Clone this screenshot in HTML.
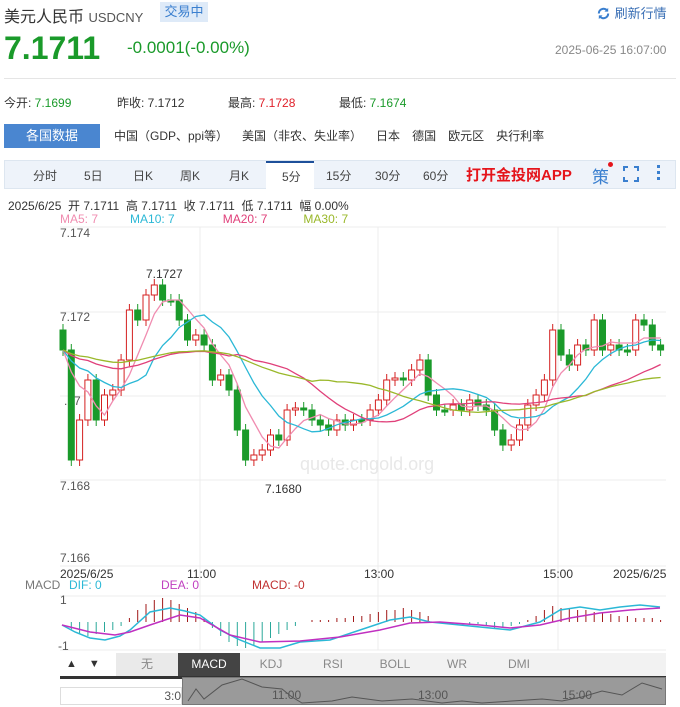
<!DOCTYPE html><html><head><meta charset="utf-8"><style>
*{margin:0;padding:0;box-sizing:border-box}
body{width:680px;height:707px;background:#fff;font-family:"Liberation Sans","Noto Sans CJK SC",sans-serif;position:relative;overflow:hidden;color:#333}
.a{position:absolute;white-space:nowrap}
</style></head><body>
<div class="a" style="left:4px;top:3px;font-size:16px;color:#333">美元人民币 <span style="font-size:13px;color:#555">USDCNY</span></div>
<div class="a" style="left:160px;top:2px;width:48px;height:20px;background:#deeaf8;color:#3a7fcf;font-size:13px;line-height:20px;text-align:center">交易中</div>
<div class="a" style="left:596px;top:3px;font-size:13px;color:#3a6fb5"><svg width="15" height="15" viewBox="0 0 16 16" style="vertical-align:-3px"><path d="M3 8a5 5 0 0 1 9-3M13 8a5 5 0 0 1-9 3" stroke="#3a7fcf" stroke-width="2.2" fill="none"/><path d="M13 2v4h-4zM3 14v-4h4z" fill="#3a7fcf"/></svg> 刷新行情</div>
<div class="a" style="left:4px;top:30px;font-size:32px;font-weight:bold;color:#1a9a2a">7.1711</div>
<div class="a" style="left:127px;top:38px;font-size:17px;color:#1a9a2a">-0.0001(-0.00%)</div>
<div class="a" style="left:555px;top:43px;font-size:12px;color:#888">2025-06-25 16:07:00</div>
<div class="a" style="left:4px;top:78px;width:672px;height:1px;background:#e5e5e5"></div>
<div class="a" style="left:4px;top:94px;font-size:12px;color:#333">今开: <span style="color:#1a9a2a">7.1699</span></div>
<div class="a" style="left:117px;top:94px;font-size:12px">昨收: 7.1712</div>
<div class="a" style="left:228px;top:94px;font-size:12px">最高: <span style="color:#e0202a">7.1728</span></div>
<div class="a" style="left:339px;top:94px;font-size:12px">最低: <span style="color:#1a9a2a">7.1674</span></div>
<div class="a" style="left:4px;top:124px;width:96px;height:24px;background:#4a86d0;color:#fff;font-size:13px;line-height:24px;text-align:center">各国数据</div>
<div class="a" style="left:100px;top:124px;width:576px;height:24px;font-size:12px;line-height:24px;color:#333"><span style="margin-left:14px">中国（GDP、ppi等）</span><span style="margin-left:14px">美国（非农、失业率）</span><span style="margin-left:14px">日本</span><span style="margin-left:12px">德国</span><span style="margin-left:12px">欧元区</span><span style="margin-left:12px">央行利率</span></div>
<div class="a" style="left:4px;top:160px;width:672px;height:29px;background:#eef3fa;border:1px solid #dde6f0"></div>
<div class="a" style="left:266px;top:161px;width:48px;height:29px;background:#fff;border-top:2px solid #1d4f9a"></div>
<div class="a" style="top:167px;left:0;font-size:12px;color:#444">
<span class="a" style="left:33px">分时</span><span class="a" style="left:84px">5日</span><span class="a" style="left:133px">日K</span><span class="a" style="left:180px">周K</span><span class="a" style="left:229px">月K</span><span class="a" style="left:282px;top:1px">5分</span><span class="a" style="left:326px">15分</span><span class="a" style="left:375px">30分</span><span class="a" style="left:423px">60分</span></div>
<div class="a" style="left:466px;top:164px;font-size:15px;font-weight:bold;color:#e5141b">打开金投网APP</div>
<div class="a" style="left:592px;top:163px;font-size:17px;color:#3a7fcf">策</div>
<div class="a" style="left:608px;top:162px;width:5px;height:5px;border-radius:50%;background:#e5141b"></div>
<svg class="a" style="left:623px;top:166px" width="16" height="16"><path d="M1 5V1h4M11 1h4v4M15 11v4h-4M5 15H1v-4" stroke="#3a7fcf" stroke-width="2" fill="none"/></svg>
<div class="a" style="left:657px;top:165px;width:3px;height:3px;background:#3a7fcf;box-shadow:0 6px #3a7fcf,0 12px #3a7fcf"></div>
<div class="a" style="left:8px;top:197px;font-size:12px;color:#333">2025/6/25 &nbsp;开 7.1711 &nbsp;高 7.1711 &nbsp;收 7.1711 &nbsp;低 7.1711 &nbsp;幅 0.00%</div>
<div class="a" style="left:60px;top:212px;font-size:12px"><span style="color:#f08cb0">MA5: 7</span><span style="color:#2bb8d6;margin-left:32px">MA10: 7</span><span style="color:#e0407a;margin-left:48px">MA20: 7</span><span style="color:#9ab82a;margin-left:36px">MA30: 7</span></div>
<svg class="a" style="left:0;top:0" width="680" height="707" id="ch">
<g stroke="#ececec" stroke-width="1">
<line x1="60" y1="227" x2="666" y2="227"/><line x1="60" y1="312" x2="666" y2="312"/><line x1="60" y1="396" x2="666" y2="396"/><line x1="60" y1="480" x2="666" y2="480"/><line x1="60" y1="566" x2="666" y2="566"/>
<line x1="200" y1="227" x2="200" y2="650"/><line x1="378" y1="227" x2="378" y2="650"/><line x1="558" y1="227" x2="558" y2="650"/>
<line x1="60" y1="596" x2="666" y2="596"/><line x1="60" y1="650" x2="666" y2="650"/>
</g>
<g font-size="12" fill="#555" font-family="Liberation Sans,sans-serif">
<text x="60" y="237">7.174</text><text x="60" y="321">7.172</text><text x="64" y="405">.17</text><text x="60" y="490">7.168</text><text x="60" y="562">7.166</text>
<text x="60" y="578" fill="#333">2025/6/25</text><text x="187" y="578" fill="#333">11:00</text><text x="364" y="578" fill="#333">13:00</text><text x="543" y="578" fill="#333">15:00</text><text x="613" y="578" fill="#333">2025/6/25</text>
<text x="146" y="278" fill="#333">7.1727</text><text x="265" y="493" fill="#333">7.1680</text>
<text x="25" y="589" fill="#777">MACD</text><text x="69" y="589" fill="#2bb8d6">DIF: 0</text><text x="161" y="589" fill="#c040c0">DEA: 0</text><text x="252" y="589" fill="#c03030">MACD: -0</text>
<text x="60" y="604">1</text><text x="58" y="650">-1</text>
</g>
<text x="300" y="470" font-size="18" fill="#e8e8e8" font-family="Liberation Sans,sans-serif">quote.cngold.org</text>
<g id="k"></g>
<path d="M62,625 75,632 90,638 105,640 120,636 130,630 150,612 170,608 185,611 200,615 220,630 240,640 260,648 280,648 300,642 330,640 360,630 390,620 410,617 430,622 460,625 490,628 510,630 540,622 560,610 580,607 600,610 620,607 640,605 660,607" stroke="#2bb8d6" stroke-width="1.5" fill="none"/>
<path d="M62,625 90,632 115,635 130,632 150,625 180,615 200,618 230,635 260,642 300,641 340,637 380,630 410,623 440,622 480,625 510,628 540,625 570,618 600,613 630,610 660,608" stroke="#c030c0" stroke-width="1.5" fill="none"/>
</svg>
<div class="a" style="left:60px;top:653px;width:606px;height:23px;background:#f2f2f2"></div>
<div class="a" style="left:60px;top:653px;width:56px;height:23px;background:#fff;font-size:11px;line-height:23px"><span style="margin-left:6px">▲</span><span style="margin-left:12px">▼</span></div>
<div class="a" style="top:653px;left:0;font-size:12px;color:#888;line-height:23px">
<span class="a" style="left:116px;width:62px;text-align:center;background:#eaeaea">无</span>
<span class="a" style="left:178px;width:62px;text-align:center;background:#444;color:#fff">MACD</span>
<span class="a" style="left:240px;width:62px;text-align:center">KDJ</span><span class="a" style="left:302px;width:62px;text-align:center">RSI</span><span class="a" style="left:364px;width:62px;text-align:center">BOLL</span><span class="a" style="left:426px;width:62px;text-align:center">WR</span><span class="a" style="left:488px;width:62px;text-align:center">DMI</span></div>
<div class="a" style="left:60px;top:676px;width:606px;height:3px;background:#333"></div>
<div class="a" style="left:182px;top:677px;width:484px;height:28px;background:#9a9a9a;border:1px solid #777"></div>
<div class="a" style="left:60px;top:687px;width:122px;height:18px;border:1px solid #ddd;font-size:12px;color:#555;text-align:right;line-height:16px">3:0</div>
<svg class="a" style="left:182px;top:677px" width="484" height="28"><path d="M6,24 14,12 22,22 40,8 60,2 80,10 100,12 110,20 120,26 150,24 170,20 200,24 230,22 260,26 280,24 300,26 330,24 360,22 380,24 400,20 420,14 440,18 460,6 480,12" stroke="#555" fill="none"/><g font-size="12" fill="#555" font-family="Liberation Sans,sans-serif"><text x="90" y="22">11:00</text><text x="236" y="22">13:00</text><text x="380" y="22">15:00</text></g></svg>
<script>
var ys=[350,460,420,380,420,395,390,360,310,320,295,285,300,300,320,340,335,345,380,375,390,430,460,455,450,435,440,410,408,410,420,425,430,420,425,420,420,410,400,380,378,380,370,360,395,410,410,405,410,400,405,410,430,445,440,425,405,395,380,330,355,365,345,350,320,350,345,350,350,320,325,345,350];
var s='',N=ys.length;
function X(i){return 63+i*8.3}
for(var i=0;i<N;i++){var o=i?ys[i-1]:ys[0]-20,c=ys[i],x=X(i),t=Math.min(o,c),b=Math.max(o,c),h=Math.max(b-t,2);
var up=c<o;var col=up?'#d42020':'#1a9a2a';
s+='<line x1="'+x+'" x2="'+x+'" y1="'+(t-6)+'" y2="'+(b+6)+'" stroke="'+col+'"/>';
s+='<rect x="'+(x-3)+'" y="'+t+'" width="6" height="'+h+'" fill="'+(up?'#fff':col)+'" stroke="'+col+'"/>';}
function ma(n,col){var p='';for(var i=0;i<N;i++){var sum=0;for(var j=i-n+1;j<=i;j++)sum+=j<0?350:ys[j];p+=(i?' ':'M')+X(i)+','+(sum/n).toFixed(1);}s+='<path d="'+p+'" stroke="'+col+'" stroke-width="1.3" fill="none"/>';}
ma(5,'#f08cb0');ma(10,'#2bb8d6');ma(20,'#e0407a');ma(30,'#9ab82a');
var hv=[0,-4,-6,-7,-6,-5,-4,-2,2,6,9,11,12,11,9,7,5,2,-3,-7,-10,-12,-13,-12,-10,-8,-6,-4,-2,0,1,1,1,2,2,3,3,4,5,6,6,7,6,5,3,0,0,0,0,-1,-1,-2,-3,-3,-2,-1,1,3,6,8,7,7,6,6,5,5,4,3,3,2,2,2,1];
for(var i=0;i<N;i++){var v=hv[i]||0,x=X(i);s+='<line x1="'+x+'" x2="'+x+'" y1="622" y2="'+(622-v*2)+'" stroke="'+(v>=0?'#a01818':'#2aa89a')+'"/>';}
document.getElementById('k').innerHTML=s;
</script>
</body></html>
